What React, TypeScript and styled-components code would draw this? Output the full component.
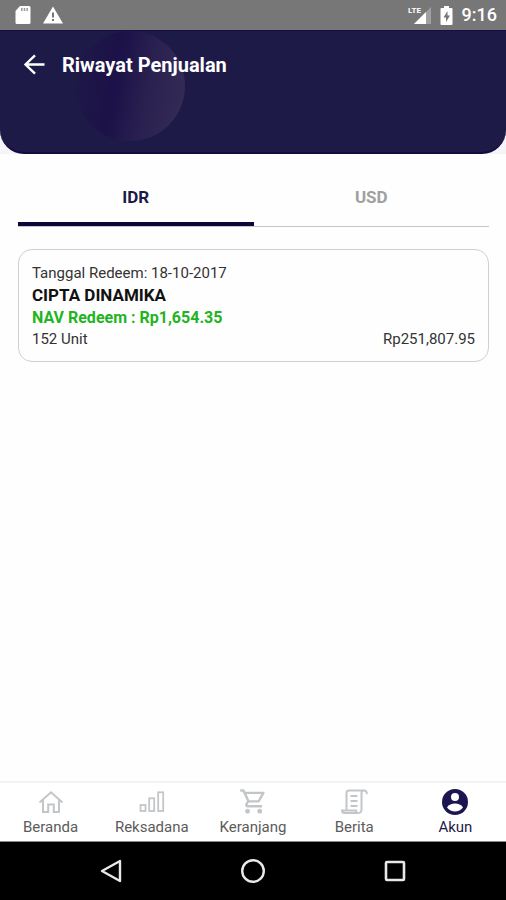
import React, { useState } from "react";
import styled, { createGlobalStyle } from "styled-components";

const navy = "#1e1a47";

const GlobalStyle = createGlobalStyle`
  *, *::before, *::after { box-sizing: border-box; }
  body { margin: 0; background: #fff; font-family: Roboto, "Liberation Sans", sans-serif; }
  button { font: inherit; color: inherit; background: none; border: 0; padding: 0; cursor: pointer; }
  svg { display: block; }
`;

const Screen = styled.div`
  min-height: 100vh;
  display: flex;
  flex-direction: column;
  background: #fefefe;
`;

const StatusBar = styled.div`
  height: 30px;
  padding: 0 9px 0 14px;
  display: flex;
  align-items: center;
  justify-content: space-between;
  background: #777;
  color: #fff;
`;

const StatusGroup = styled.div<{ $gap: number }>`
  display: flex;
  align-items: center;
  gap: ${(p) => p.$gap}px;
`;

const Clock = styled.time`
  font-size: 18px;
  line-height: 24px;
  font-weight: 500;
`;

const HeaderBack = styled.div`
  background: linear-gradient(#150c48 50%, #f4f4f9 50%);
`;

const Header = styled.header`
  position: relative;
  height: 124px;
  padding: 20px 20px;
  background: ${navy};
  border-top: 1px solid #150c48;
  border-bottom: 2px solid #120a40;
  border-radius: 0 0 24px 24px;
  overflow: hidden;
`;

const Glow = styled.div`
  position: absolute;
  top: 0;
  left: 75px;
  width: 110px;
  height: 110px;
  border-radius: 50%;
  background: linear-gradient(100deg, ${navy} 0%, #1c1148 38%, #2a2150 65%, #352c57 100%);
`;

const TitleRow = styled.div`
  position: relative;
  display: flex;
  align-items: center;
  gap: 14px;
  color: #fff;
`;

const BackButton = styled.button`
  width: 28px;
  height: 28px;
`;

const Title = styled.h1`
  margin: 0;
  font-size: 20px;
  line-height: 28px;
  font-weight: 700;
`;

const Content = styled.main`
  flex: 1;
  padding: 15px 17px 16px 18px;
`;

const TabList = styled.div`
  display: grid;
  grid-template-columns: 1fr 1fr;
  border-bottom: 1px solid #c6c6ca;
`;

const Tab = styled.button<{ $active: boolean }>`
  height: 57px;
  padding-top: 2px;
  border-bottom: 4px solid ${(p) => (p.$active ? "#0d0638" : "transparent")};
  color: ${(p) => (p.$active ? navy : "#a0a0a0")};
  font-size: 17px;
  line-height: 24px;
  font-weight: 700;
`;

const Card = styled.article`
  margin-top: 22px;
  padding: 13px 13px 12px;
  border: 1px solid #d0d0d4;
  border-radius: 14px;
  color: #333;
  font-size: 15px;
  line-height: 20px;
`;

const CardLine = styled.p`
  margin: 0;
  display: flex;
  justify-content: space-between;
`;

const FundName = styled.h2`
  margin: 0;
  font-size: 17px;
  line-height: 24px;
  font-weight: 700;
  color: #111;
`;

const NavPrice = styled.p`
  margin: 0;
  font-size: 16px;
  line-height: 22px;
  font-weight: 700;
  color: #1fb422;
`;

const BottomNav = styled.nav`
  display: grid;
  grid-template-columns: repeat(5, 1fr);
  height: 61px;
  padding-top: 5px;
  border-top: 2px solid #f2f2f2;
  border-bottom: 1px solid #8a8a8a;
  background: #fff;
`;

const NavItem = styled.a<{ $active?: boolean }>`
  display: flex;
  flex-direction: column;
  align-items: center;
  text-decoration: none;
  color: ${(p) => (p.$active ? navy : "#5c5c5c")};
  font-size: 15px;
  line-height: 22px;

  svg { color: ${(p) => (p.$active ? "#1b1650" : "#c3c6c8")}; }
`;

const SystemBar = styled.div`
  display: grid;
  grid-template-columns: repeat(3, 1fr);
  height: 58px;
  padding: 0 40px;
  background: #000;
  color: #e8e8e8;
`;

const SystemButton = styled.button`
  display: flex;
  align-items: center;
  justify-content: center;
`;

const SdCard = () => (
  <svg width="17" height="20" viewBox="0 0 17 20" aria-hidden="true">
    <path d="M6 1h9a1.500 1.500 0 0 1 1.500 1.500v15a1.500 1.500 0 0 1-1.500 1.500H3A1.500 1.500 0 0 1 1.500 17.500V6z" fill="#fff" />
    <path d="M7 3h1.500v3H7zM9.700 3h1.500v3H9.700zM12.400 3h1.500v3h-1.500z" fill="#999" />
  </svg>
);

const Warning = () => (
  <svg width="20" height="18" viewBox="0 0 20 18" aria-hidden="true">
    <path d="M10 0.500L20 17.500H0z" fill="#fff" />
    <path d="M9 6.500h2v5H9zM9 13h2v2H9z" fill="#777" />
  </svg>
);

const LteText = styled.text`
  font-family: Roboto, sans-serif;
  font-size: 8px;
  font-weight: 700;
  fill: #fff;
`;

const Signal = () => (
  <svg width="24" height="20" viewBox="0 0 24 20" role="img" aria-label="LTE">
    <path d="M24 2v17H7z" fill="#a0a0a0" />
    <path d="M19 7v12H7z" fill="#fff" />
    <path d="M0 0h15v9H0z" fill="#777" />
    <LteText x="1" y="8">LTE</LteText>
  </svg>
);

const Battery = () => (
  <svg width="13" height="19" viewBox="0 0 13 19" aria-hidden="true">
    <path d="M4 0h5v2h2.500a1 1 0 0 1 1 1v15a1 1 0 0 1-1 1h-10a1 1 0 0 1-1-1V3a1 1 0 0 1 1-1H4z" fill="#fff" />
    <path d="M7.500 5L3.500 11.500H6V16l4-6.500H7.500z" fill="#777" />
  </svg>
);

const BackArrow = () => (
  <svg width="28" height="28" viewBox="0 0 28 28" fill="none" stroke="currentColor" strokeWidth="2.400" aria-hidden="true">
    <path d="M24.500 13.500H6M15 4.300L5.500 13.500l9.500 9.200" />
  </svg>
);

const HomeIcon = () => (
  <svg width="28" height="28" viewBox="0 0 28 28" fill="none" stroke="currentColor" strokeWidth="2" aria-hidden="true">
    <path d="M2.500 14.500L14 4.300 25.500 14.500M6 12v12h5.200v-7.500h5.600v7.500H22V12" />
  </svg>
);

const BarsIcon = () => (
  <svg width="28" height="28" viewBox="0 0 28 28" fill="none" stroke="currentColor" strokeWidth="1.800" aria-hidden="true">
    <rect x="2.500" y="17" width="5" height="6" />
    <rect x="11.200" y="10.300" width="5" height="12.700" />
    <rect x="20.200" y="4.300" width="5" height="18.700" />
  </svg>
);

const CartIcon = () => (
  <svg width="28" height="28" viewBox="0 1 23 23" fill="currentColor" aria-hidden="true">
    <path d="M15.550 13c.75 0 1.410-.41 1.750-1.030l3.580-6.490A.996.996 0 0 0 20.010 4H5.210l-.94-2H1v2h2l3.600 7.590-1.350 2.440C4.520 15.370 5.480 17 7 17h12v-2H7l1.100-2h7.450zM6.160 6h12.150l-2.760 5H8.530L6.160 6zM7 18c-1.100 0-1.990.9-1.990 2S5.900 22 7 22s2-.9 2-2-.9-2-2-2zm10 0c-1.100 0-1.990.9-1.990 2s.89 2 1.990 2 2-.9 2-2-.9-2-2-2z" />
  </svg>
);

const NewsIcon = () => (
  <svg width="28" height="28" viewBox="0 0 28 28" fill="none" stroke="currentColor" strokeWidth="2" aria-hidden="true">
    <path d="M6.500 22V5a2.500 2.500 0 0 1 2.500-2.500h15a2.500 2.500 0 0 1 2.500 3.500M24 2.500a2.500 2.500 0 0 0-2.500 2.500v17a3 3 0 0 1-3 3" />
    <path d="M18.500 25H4.500a2.500 2.500 0 0 1-2.500-2.500h14a2.500 2.500 0 0 0 2.500 2.500" />
    <path d="M10.500 8h7M10.500 13h7M10.500 18h7" />
  </svg>
);

const AccountIcon = () => (
  <svg width="28" height="28" viewBox="0 0 28 28" aria-hidden="true">
    <circle cx="14" cy="14" r="13" fill="currentColor" />
    <circle cx="14" cy="9" r="4" fill="#fff" />
    <path d="M6 19.500c1.500-3 5-4 8-4s6.500 1 8 4c-2 2.700-5 4-8 4s-6-1.300-8-4z" fill="#fff" />
  </svg>
);

const navItems = [
  { label: "Beranda", Icon: HomeIcon },
  { label: "Reksadana", Icon: BarsIcon },
  { label: "Keranjang", Icon: CartIcon },
  { label: "Berita", Icon: NewsIcon },
  { label: "Akun", Icon: AccountIcon },
];

const currencies = ["IDR", "USD"];

export default function App() {
  const [currency, setCurrency] = useState("IDR");

  return (
    <Screen>
      <GlobalStyle />
      <StatusBar>
        <StatusGroup $gap={12}>
          <SdCard />
          <Warning />
        </StatusGroup>
        <StatusGroup $gap={9}>
          <Signal />
          <Battery />
          <Clock>9:16</Clock>
        </StatusGroup>
      </StatusBar>

      <HeaderBack>
        <Header>
          <Glow />
          <TitleRow>
            <BackButton type="button" aria-label="Kembali">
              <BackArrow />
            </BackButton>
            <Title>Riwayat Penjualan</Title>
          </TitleRow>
        </Header>
      </HeaderBack>

      <Content>
        <TabList role="tablist">
          {currencies.map((c) => (
            <Tab
              key={c}
              type="button"
              role="tab"
              aria-selected={c === currency}
              $active={c === currency}
              onClick={() => setCurrency(c)}
            >
              {c}
            </Tab>
          ))}
        </TabList>

        <Card>
          <CardLine>Tanggal Redeem: 18-10-2017</CardLine>
          <FundName>CIPTA DINAMIKA</FundName>
          <NavPrice>NAV Redeem : Rp1,654.35</NavPrice>
          <CardLine>
            <span>152 Unit</span>
            <span>Rp251,807.95</span>
          </CardLine>
        </Card>
      </Content>

      <BottomNav>
        {navItems.map(({ label, Icon }) => (
          <NavItem key={label} href="#" $active={label === "Akun"}>
            <Icon />
            {label}
          </NavItem>
        ))}
      </BottomNav>

      <SystemBar>
        <SystemButton type="button" aria-label="Back">
          <svg width="24" height="26" viewBox="0 0 24 26" fill="none" stroke="currentColor" strokeWidth="2.400" strokeLinejoin="round">
            <path d="M21 3v20L3 13z" />
          </svg>
        </SystemButton>
        <SystemButton type="button" aria-label="Home">
          <svg width="26" height="26" viewBox="0 0 26 26" fill="none" stroke="currentColor" strokeWidth="2.400">
            <circle cx="13" cy="13" r="10.800" />
          </svg>
        </SystemButton>
        <SystemButton type="button" aria-label="Overview">
          <svg width="24" height="24" viewBox="0 0 24 24" fill="none" stroke="currentColor" strokeWidth="2.600">
            <rect x="3" y="3" width="18" height="18" rx="1" />
          </svg>
        </SystemButton>
      </SystemBar>
    </Screen>
  );
}
